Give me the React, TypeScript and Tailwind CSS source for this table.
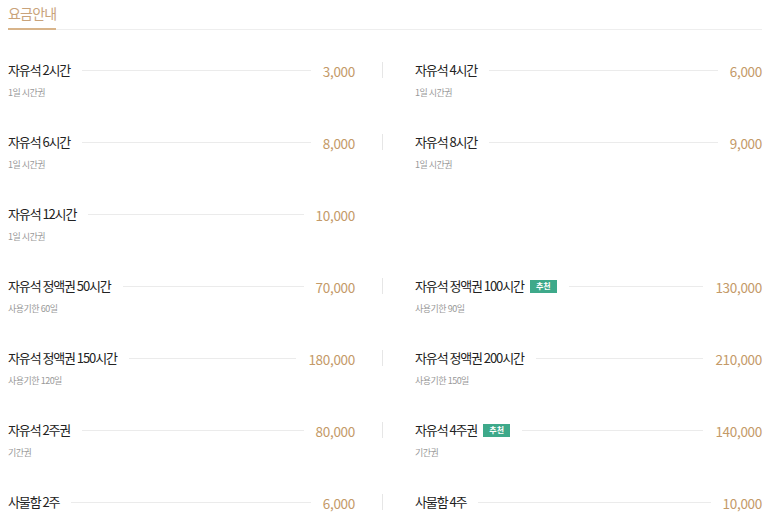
import React from 'react'

type Item = { name: string; sub?: string; price: string; best?: boolean }

const rows: [Item, Item | null][] = [
  [
    { name: '자유석 2시간', sub: '1일 시간권', price: '3,000' },
    { name: '자유석 4시간', sub: '1일 시간권', price: '6,000' },
  ],
  [
    { name: '자유석 6시간', sub: '1일 시간권', price: '8,000' },
    { name: '자유석 8시간', sub: '1일 시간권', price: '9,000' },
  ],
  [{ name: '자유석 12시간', sub: '1일 시간권', price: '10,000' }, null],
  [
    { name: '자유석 정액권 50시간', sub: '사용기한 60일', price: '70,000' },
    { name: '자유석 정액권 100시간', sub: '사용기한 90일', price: '130,000', best: true },
  ],
  [
    { name: '자유석 정액권 150시간', sub: '사용기한 120일', price: '180,000' },
    { name: '자유석 정액권 200시간', sub: '사용기한 150일', price: '210,000' },
  ],
  [
    { name: '자유석 2주권', sub: '기간권', price: '80,000' },
    { name: '자유석 4주권', sub: '기간권', price: '140,000', best: true },
  ],
  [
    { name: '사물함 2주', price: '6,000' },
    { name: '사물함 4주', price: '10,000' },
  ],
]

function PriceItem({ item }: { item: Item }) {
  return (
    <div className="w-[347px] pb-8">
      <div className="flex items-center h-5">
        <span className="text-[13px] tracking-[-1.1px] text-[#222] whitespace-nowrap">{item.name}</span>
        {item.best && (
          <span className="ml-1.5 h-[13px] w-[27px] flex items-center justify-center bg-[#3ea98a] text-white text-[8px] font-bold leading-none">
            추천
          </span>
        )}
        <span className="flex-1 h-px bg-[#ebebeb] mx-3" />
        <span className="text-[13.5px] text-[#c49a68] tracking-[-0.3px] mt-0.5">{item.price}</span>
      </div>
      {item.sub && (
        <p className="mt-1.5 h-[14px] leading-[14px] text-[9px] tracking-[-0.5px] text-[#999]">{item.sub}</p>
      )}
    </div>
  )
}

export default function App() {
  return (
    <div className="min-h-screen bg-white pl-2 pr-[11px] font-['Noto_Sans_CJK_KR','Noto_Sans',sans-serif]">
      <div className="pt-[3px] border-b border-[#eeeeee]">
        <h2 className="w-fit text-[14px] leading-5 tracking-[-0.8px] text-[#c9a37a] pb-[5px] border-b-2 border-[#d8b48a] -mb-px">
          요금안내
        </h2>
      </div>

      <div className="mt-[30px]">
        {rows.map(([left, right], i) => (
          <div key={i} className="flex">
            <PriceItem item={left} />
            <div className="w-[60px] pl-[27px] pt-[2px]">
              {right && <div className="w-px h-4 bg-[#e6e6e6]" />}
            </div>
            {right ? <PriceItem item={right} /> : <div className="w-[347px]" />}
          </div>
        ))}
      </div>
    </div>
  )
}
